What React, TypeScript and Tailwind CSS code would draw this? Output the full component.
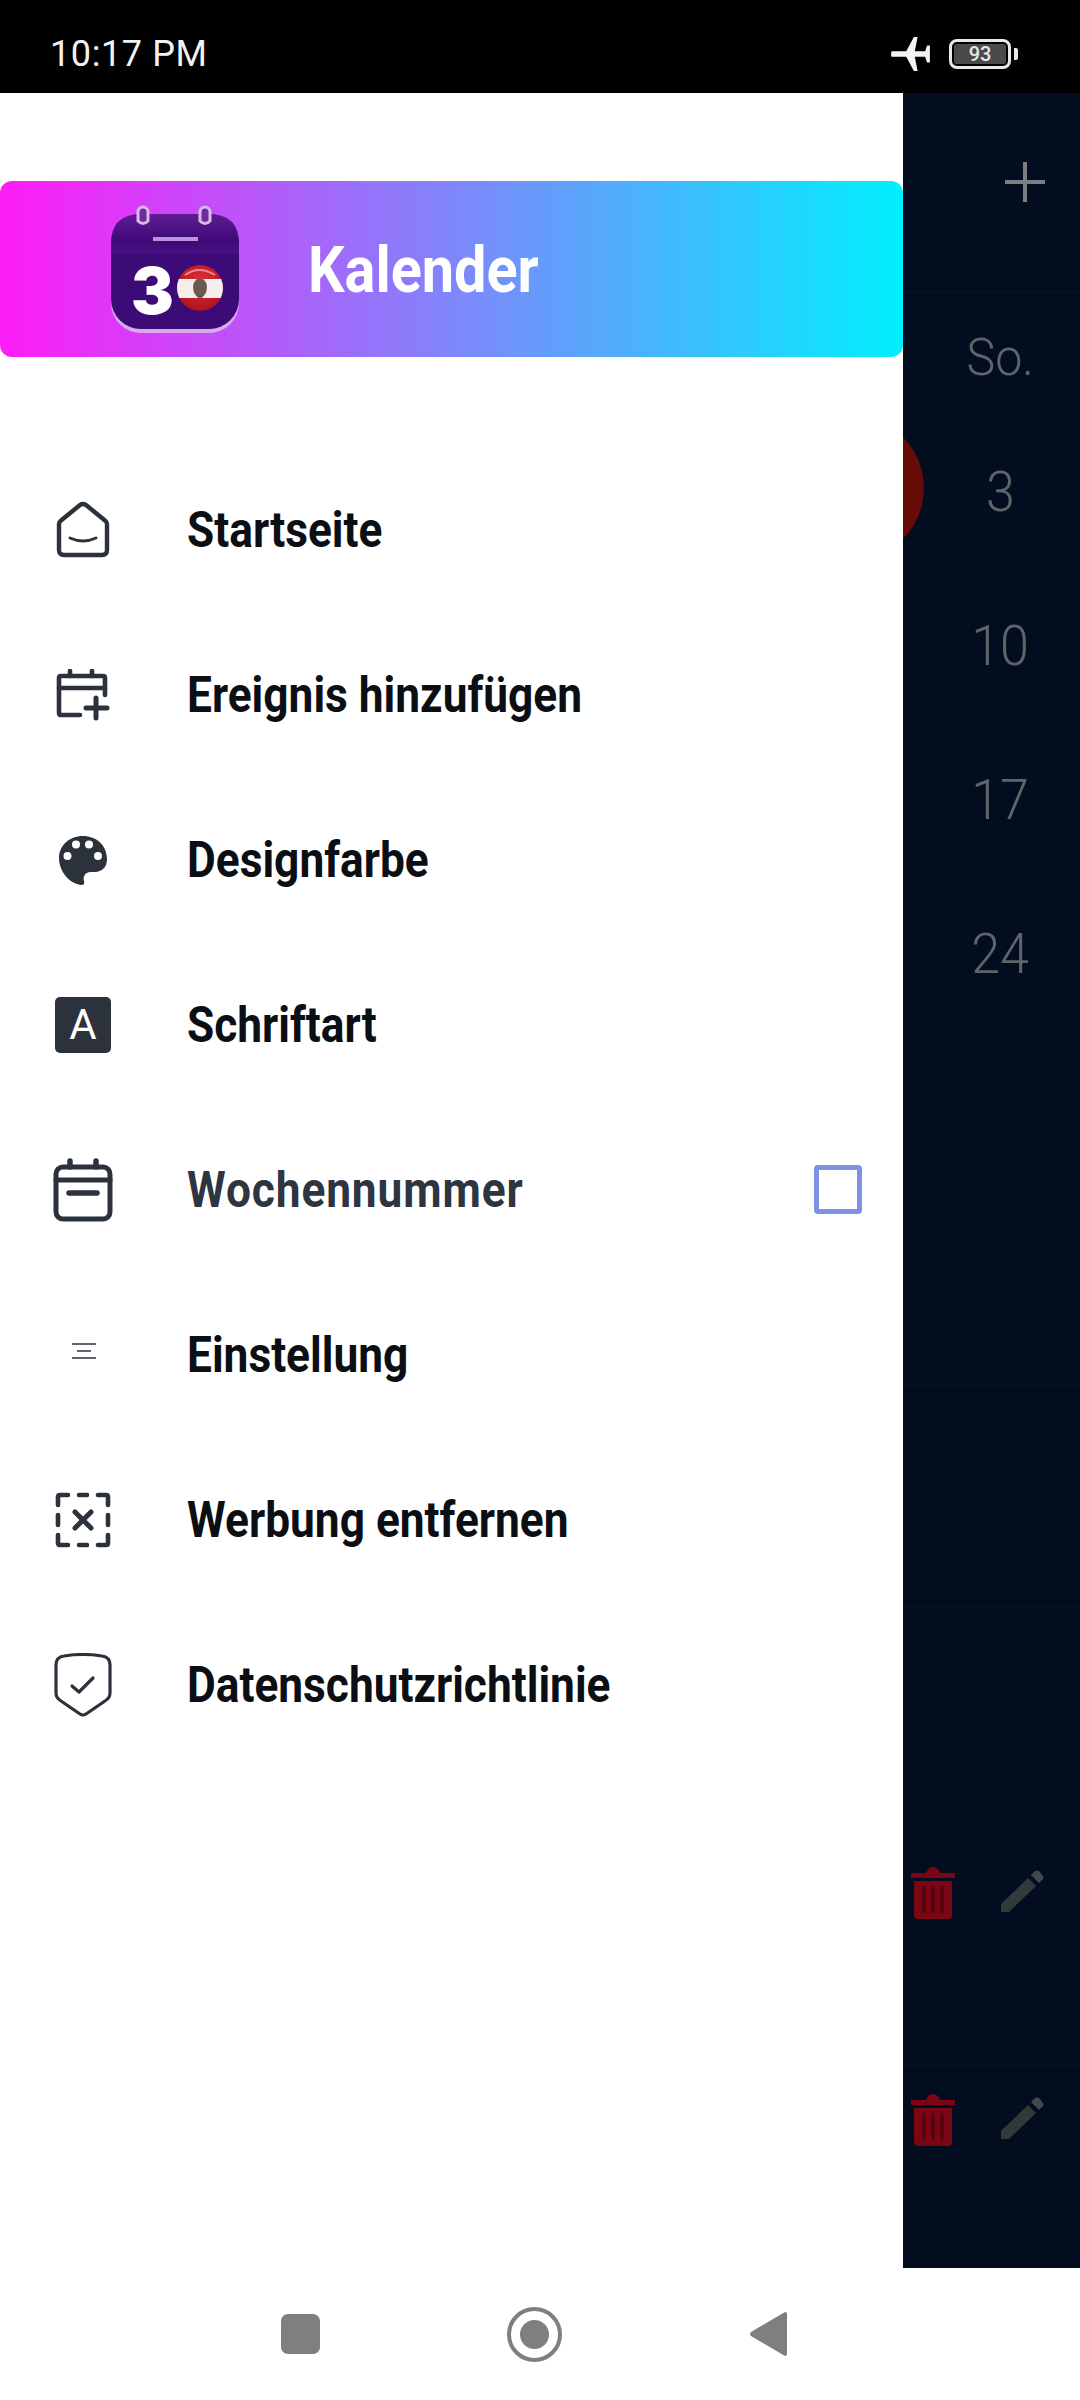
import React from "react";

const stroke = "#2b323c";

function HomeIcon() {
  return (
    <svg width="56" height="58" viewBox="0 0 56 58" fill="none" stroke={stroke} strokeWidth="4.4" strokeLinecap="round" strokeLinejoin="round">
      <path d="M4 23 Q4 21 6 19.500 L25 4 Q28 2 31 4 L50 19.500 Q52 21 52 23 V49 Q52 54 47 54 H9 Q4 54 4 49 Z" />
      <path d="M15 37 Q28 43 41 37" strokeWidth="3" />
    </svg>
  );
}
function CalPlusIcon() {
  return (
    <svg width="54" height="52" viewBox="0 0 54 52" fill="none" stroke={stroke} strokeWidth="4.6" strokeLinecap="round" strokeLinejoin="round">
      <path d="M24 46 H5 Q3 46 3 44 V9 Q3 7 5 7 H47 Q49 7 49 9 V26" />
      <path d="M3 19 H49" />
      <path d="M14 2 V7 M36 2 V7" />
      <path d="M40 29 V49 M30 39 H51" strokeWidth="5" />
    </svg>
  );
}
function PaletteIcon() {
  return (
    <svg width="50" height="50" viewBox="0 0 50 50">
      <path d="M25 1 C11 1 1 11 1 23 C1 36 11 49 24 50 C25 50 27 49 26 46 C25 43 26 37 33 37 H37 C44 37 49 32 49 24 C49 10 38 1 25 1 Z" fill={stroke} />
      <circle cx="9.500" cy="21" r="4" fill="#fff" />
      <circle cx="18" cy="9.500" r="4" fill="#fff" />
      <circle cx="31" cy="9.500" r="4" fill="#fff" />
      <circle cx="40" cy="21" r="4" fill="#fff" />
    </svg>
  );
}
function LetterIcon() {
  return (
    <div className="w-[56px] h-[56px] rounded-[5px] bg-[#2b323c] flex items-center justify-center text-white text-[42px] leading-none font-normal font-['Roboto',sans-serif]">
      A
    </div>
  );
}
function CalIcon() {
  return (
    <svg width="60" height="64" viewBox="0 0 60 64" fill="none" stroke={stroke} strokeWidth="5" strokeLinecap="round" strokeLinejoin="round">
      <rect x="3" y="9" width="54" height="52" rx="7" />
      <path d="M3 22 H57" />
      <path d="M17 3 V9 M43 3 V9" strokeWidth="5.500" />
      <path d="M16 35 H44" strokeWidth="5.500" />
    </svg>
  );
}
function LinesIcon() {
  return (
    <svg width="24" height="18" viewBox="0 0 24 18" fill="none" stroke={stroke} strokeWidth="1.5" className="mb-[7px] ml-[2px]">
      <path d="M0 2 H24 M5 9 H19 M0 16 H24" />
    </svg>
  );
}
function DashedXIcon() {
  return (
    <svg width="56" height="56" viewBox="0 0 56 56" fill="none" stroke={stroke} strokeWidth="4.6" strokeLinecap="round" strokeLinejoin="round">
      <path d="M3 13 V5 Q3 3 5 3 H13 M24 3 H32 M43 3 H51 Q53 3 53 5 V13 M53 23 V33 M53 43 V51 Q53 53 51 53 H43 M32 53 H24 M13 53 H5 Q3 53 3 51 V43 M3 33 V23" />
      <path d="M20 20 L36 36 M36 20 L20 36" strokeWidth="5" />
    </svg>
  );
}
function ShieldIcon() {
  return (
    <svg width="58" height="64" viewBox="0 0 58 64" fill="none" stroke={stroke} strokeWidth="3.2" strokeLinecap="round" strokeLinejoin="round">
      <path d="M2 12 Q2 4 10 3 Q29 0 48 3 Q56 4 56 12 V40 Q56 45 51 48 L32 61 Q29 63 26 61 L7 48 Q2 45 2 40 Z" />
      <path d="M18 33 L25 39 L39 25" />
    </svg>
  );
}

function Logo() {
  return (
    <div className="relative w-[132px] h-[128px] shrink-0">
      <svg className="absolute inset-0" width="132" height="128" viewBox="0 0 132 128">
        <defs>
          <linearGradient id="top" x1="0" y1="0" x2="0" y2="1">
            <stop offset="0" stopColor="#5e1e92" />
            <stop offset="0.7" stopColor="#3d0878" />
            <stop offset="1" stopColor="#4a1284" />
          </linearGradient>
          <radialGradient id="ball" cx="0.5" cy="0.4" r="0.65">
            <stop offset="0" stopColor="#e8333a" />
            <stop offset="1" stopColor="#a80f1c" />
          </radialGradient>
          <clipPath id="ballClip">
            <circle cx="91" cy="83" r="23" />
          </clipPath>
        </defs>
        <rect x="2" y="14" width="128" height="114" rx="30" fill="#d9a9ee" />
        <rect x="2" y="9" width="128" height="115" rx="30" fill="#3c0b78" />
        <path d="M2 48 V39 Q2 9 32 9 H100 Q130 9 130 39 V48 Z" fill="url(#top)" />
        <rect x="44" y="32" width="45" height="4" fill="#b796d3" />
        <path d="M29 15 V6 A5 5 0 0 1 39 6 V15 Q34 20 29 15 Z" fill="#6d2ba0" stroke="#d9b9ea" strokeWidth="3" transform="translate(0,1)" />
        <path d="M91 15 V6 A5 5 0 0 1 101 6 V15 Q96 20 91 15 Z" fill="#6d2ba0" stroke="#d9b9ea" strokeWidth="3" transform="translate(0,1)" />
        <circle cx="91" cy="83" r="23" fill="url(#ball)" />
        <rect x="68" y="74" width="46" height="19" fill="#f6eeee" clipPath="url(#ballClip)" />
        <path d="M91 73 Q98 75 98 82 Q98 90 91 94 Q84 90 84 82 Q84 75 91 73 Z" fill="#6b5a50" />
        <path d="M76 70 Q90 60 106 70" stroke="#f08a8a" strokeWidth="2" fill="none" />
      </svg>
      <span className="absolute left-[22px] top-[54px] text-white font-black text-[64px] leading-[64px] font-['Inter',sans-serif]">3</span>
    </div>
  );
}

const items: { label: string; icon: React.ReactNode; muted?: boolean; check?: boolean }[] = [
  { label: "Startseite", icon: <HomeIcon /> },
  { label: "Ereignis hinzufügen", icon: <CalPlusIcon /> },
  { label: "Designfarbe", icon: <PaletteIcon /> },
  { label: "Schriftart", icon: <LetterIcon /> },
  { label: "Wochennummer", icon: <CalIcon />, muted: true, check: true },
  { label: "Einstellung", icon: <LinesIcon /> },
  { label: "Werbung entfernen", icon: <DashedXIcon /> },
  { label: "Datenschutzrichtlinie", icon: <ShieldIcon /> },
];

function Trash() {
  return (
    <svg width="46" height="56" viewBox="0 0 46 56" fill="#7b0512">
      <path d="M1 9 H16 Q18 3 23 3 Q28 3 30 9 H45 V14 H1 Z" />
      <path d="M4 17 H42 V51 Q42 55 38 55 H8 Q4 55 4 51 Z" />
      <path d="M14 22 V49 M23 22 V49 M32 22 V49" stroke="#4f0410" strokeWidth="3" />
    </svg>
  );
}
function Pencil() {
  return (
    <svg width="44" height="44" viewBox="0 0 44 44">
      <path d="M1 34 L28 8 L36 16 L9 42 H1 Z" fill="#33393a" />
      <path d="M31 5 L35 1 Q37 0 39 1 L43 6 Q44 8 43 9 L39 13 Z" fill="#3f4a4c" />
    </svg>
  );
}

function Divider() {
  return <div className="w-full h-[2px] bg-[#051225] shrink-0" />;
}

export default function App() {
  return (
    <div className="w-[1080px] h-[2400px] flex flex-col bg-white font-['Roboto',sans-serif] overflow-hidden">
      <div className="h-[93px] bg-black flex items-center justify-between pl-[50px] pr-[62px] shrink-0">
        <span className="text-[#f2f2f2] text-[36px] tracking-[0.6px] font-['Roboto',sans-serif] mt-[14px] leading-none">10:17 PM</span>
        <div className="flex items-center gap-[18px] mt-[14px]">
          <svg width="40" height="34" viewBox="0 0 42 36" fill="#f4f4f4">
            <path d="M0 16 Q0 15 2 15 L16 15 L24 0 H28 L25 15 H36 L38 9 H41 V27 H38 L36 21 H25 L28 36 H24 L16 21 H2 Q0 21 0 20 Z" />
          </svg>
          <div className="flex items-center gap-[3px]">
            <div className="w-[62px] h-[30px] border-[3px] border-[#e8e8e8] rounded-[8px] p-[2px]">
              <div className="w-full h-full bg-[#4a4a4a] rounded-[2px] flex items-center justify-center text-[#e8e8e8] text-[20px] leading-none font-medium">93</div>
            </div>
            <div className="w-[4px] h-[12px] bg-[#e8e8e8] rounded-r-[2px]" />
          </div>
        </div>
      </div>

      <div className="flex h-[2175px] relative shrink-0">
        <div className="w-[903px] bg-white shrink-0 pt-[88px] relative z-10">
          <div className="h-[176px] rounded-[12px] bg-[linear-gradient(90deg,#ff1cf7,#00f0ff)] flex items-center pl-[109px]">
            <Logo />
            <span className="ml-[67px] mt-[4px] text-white text-[64px] leading-none font-bold inline-block origin-left scale-x-[0.9] font-['Roboto',sans-serif]">Kalender</span>
          </div>
          <div className="mt-[90px] flex flex-col">
            {items.map((it) => (
              <div key={it.label} className="h-[165px] flex items-center">
                <div className="w-[166px] mr-[21px] flex justify-center shrink-0">{it.icon}</div>
                <span
                  className={`text-[50px] mt-[1px] leading-none font-bold inline-block origin-left scale-x-[0.885] whitespace-nowrap ${
                    it.muted ? "text-[#2d3540] tracking-[1px]" : "text-[#0b0f14]"
                  }`}
                >
                  {it.label}
                </span>
                {it.check && (
                  <div className="ml-auto mr-[41px] w-[48px] h-[49px] border-[5px] border-[#7f91e4] rounded-[4px]" />
                )}
              </div>
            ))}
          </div>
        </div>

        <div className="flex-1 bg-[#020e20] flex flex-col">
          <div className="h-[198px] w-full flex items-center justify-end pr-[35px] pb-[20px] shrink-0">
            <svg width="40" height="40" viewBox="0 0 40 40" fill="#7c7f82">
              <path d="M18 0 H22 V18 H40 V22 H22 V40 H18 V22 H0 V18 H18 Z" />
            </svg>
          </div>
          <Divider />
          <div className="w-full pl-[18px] flex flex-col text-[#5f6469] text-[56px] leading-none font-light font-['Roboto',sans-serif] items-center">
            <div className="mt-[38px] h-[54px] flex items-center text-[52px] scale-x-[0.93]">So.</div>
            <div className="mt-[30px] h-[153px] flex items-center scale-x-[0.93]">3</div>
            <div className="h-[155px] flex items-center scale-x-[0.93]">10</div>
            <div className="h-[153px] flex items-center scale-x-[0.93]">17</div>
            <div className="h-[155px] flex items-center scale-x-[0.93]">24</div>
          </div>
          <div className="mt-[353px]"><Divider /></div>
          <div className="mt-[220px]"><Divider /></div>
          <div className="w-full flex items-center pl-[7px] gap-[44px] mt-[256px]">
            <Trash />
            <Pencil />
          </div>
          <div className="mt-[144px]"><Divider /></div>
          <div className="w-full flex items-center pl-[7px] gap-[44px] mt-[25px]">
            <Trash />
            <Pencil />
          </div>
        </div>
        <div className="absolute left-[780px] top-[323px] w-[144px] h-[144px] rounded-full bg-[#660c06]" />
      </div>

      <div className="flex-1 bg-white flex items-center pl-[281px]">
        <div className="flex items-center">
          <div className="w-[39px] h-[40px] rounded-[7px] bg-[#7f7f7f]" />
          <div className="ml-[187px] w-[55px] h-[55px] rounded-full border-[4px] border-[#7f7f7f] flex items-center justify-center">
            <div className="w-[29px] h-[29px] rounded-full bg-[#7f7f7f]" />
          </div>
          <svg width="38" height="46" viewBox="0 0 38 46" fill="#7f7f7f" className="ml-[187px]">
            <path d="M36 1 Q38 1 38 3 V43 Q38 45 36 45 L2 25 Q0 23 2 21 Z" />
          </svg>
        </div>
      </div>
    </div>
  );
}
